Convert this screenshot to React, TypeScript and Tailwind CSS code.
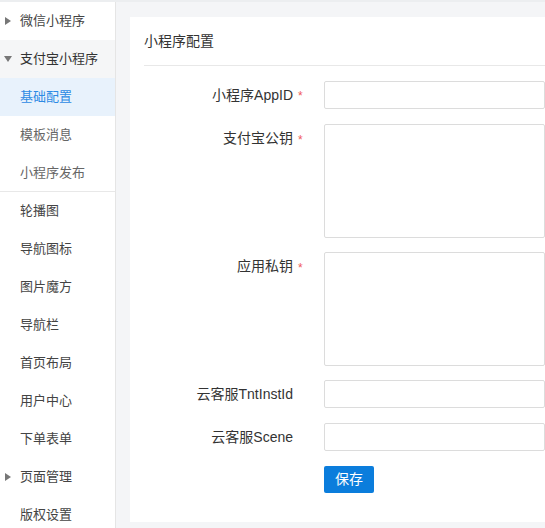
import React from 'react';

const font = { fontFamily: '"Liberation Sans", "Noto Sans CJK SC", sans-serif' };

type NavItem = { label: string; arrow?: 'right' | 'down'; group?: boolean; active?: boolean; sub?: boolean; divider?: boolean };

const nav: NavItem[] = [
  { label: '微信小程序', arrow: 'right' },
  { label: '支付宝小程序', arrow: 'down', group: true },
  { label: '基础配置', active: true },
  { label: '模板消息', sub: true },
  { label: '小程序发布', sub: true, divider: true },
  { label: '轮播图' },
  { label: '导航图标' },
  { label: '图片魔方' },
  { label: '导航栏' },
  { label: '首页布局' },
  { label: '用户中心' },
  { label: '下单表单' },
  { label: '页面管理', arrow: 'right' },
  { label: '版权设置' },
];

function Arrow({ dir }: { dir: 'right' | 'down' }) {
  return dir === 'right' ? (
    <svg width="6" height="8" viewBox="0 0 6 8" className="absolute left-[5px] top-1/2 -translate-y-1/2">
      <path d="M0 0 L6 4 L0 8 Z" fill="#777" />
    </svg>
  ) : (
    <svg width="8" height="6" viewBox="0 0 8 6" className="absolute left-[4px] top-1/2 -translate-y-1/2">
      <path d="M0 0 L8 0 L4 6 Z" fill="#777" />
    </svg>
  );
}

function Field({ label, required, tall, mb }: { label: string; required?: boolean; tall?: boolean; mb: string }) {
  return (
    <div className={`flex ${mb}`}>
      <div className={`relative w-[163px] shrink-0 text-right text-[14px] text-[#333] ${tall ? 'pt-[5px] leading-[18px]' : 'leading-[28px]'}`}>
        <span>{label}</span>
        {required && (
          <span className={`absolute left-[168px] text-[#f05a5a] text-[12px] ${tall ? 'top-[7px]' : 'top-[1px]'}`}>*</span>
        )}
      </div>
      <div className="ml-[31px] flex-1">
        {tall ? (
          <textarea className="block w-full h-[114px] border border-[#dcdcdc] rounded-[2px] resize-none outline-none" />
        ) : (
          <input className="block w-full h-[28px] border border-[#dcdcdc] rounded-[2px] outline-none" />
        )}
      </div>
    </div>
  );
}

export default function App() {
  return (
    <div className="w-[545px] h-[528px] overflow-hidden flex bg-white border-t-2 border-t-[#eceef0]" style={font}>
      <aside className="w-[116px] shrink-0 border-r border-[#e5e5e5] bg-white">
        {nav.map((item) => (
          <div
            key={item.label}
            className={`relative h-[38px] flex items-center pl-[20px] text-[13px] ${
              item.active
                ? 'bg-[#e8f2fc] text-[#2d8ae4]'
                : item.group
                  ? 'bg-[#f5f6f7] text-[#333]'
                  : item.sub
                    ? 'text-[#666]'
                    : 'text-[#444]'
            } ${item.divider ? 'border-b border-[#e8e8e8]' : ''}`}
          >
            {item.arrow && <Arrow dir={item.arrow} />}
            {item.label}
          </div>
        ))}
      </aside>
      <main className="flex-1 bg-[#f4f5f7] pl-[14px] pt-[15px]">
        <div className="bg-white h-[505px]">
          <div className="ml-[14px] h-[49px] border-b border-[#e8e8e8] flex items-center text-[14px] text-[#333] pt-[1px]">小程序配置</div>
          <div className="pt-[15px]">
            <Field label="小程序AppID" required mb="mb-[15px]" />
            <Field label="支付宝公钥" required tall mb="mb-[14px]" />
            <Field label="应用私钥" required tall mb="mb-[14px]" />
            <Field label="云客服TntInstId" mb="mb-[15px]" />
            <Field label="云客服Scene" mb="mb-[15px]" />
            <div className="pl-[194px]">
              <button className="w-[50px] h-[27px] bg-[#0b7ddc] text-white text-[14px] rounded-[2px]">保存</button>
            </div>
          </div>
        </div>
      </main>
    </div>
  );
}
